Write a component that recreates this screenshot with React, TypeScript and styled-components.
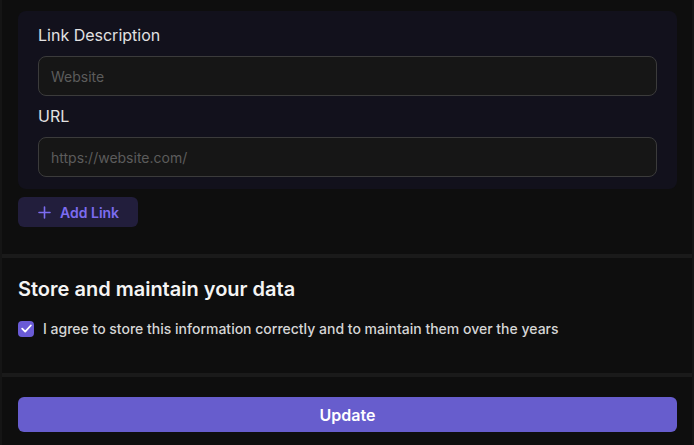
import React from "react";
import styled, { createGlobalStyle } from "styled-components";

const Global = createGlobalStyle`
  html, body { margin: 0; padding: 0; background: #0e0e0e; }
  body { font-family: Inter, "Noto Sans", sans-serif; -webkit-font-smoothing: antialiased; }
  * { box-sizing: border-box; }
`;

const Page = styled.div`
  width: 694px;
  height: 445px;
  overflow: hidden;
  background: #0e0e0e;
  border-left: 2px solid #151515;
  border-right: 2px solid #151515;
  display: flex;
  flex-direction: column;
`;

const Section = styled.section<{ $pt: number; $pb: number }>`
  padding: ${(p) => p.$pt}px 15px ${(p) => p.$pb}px 16px;
  border-bottom: 4px solid #1a1a1a;
  &:last-child { border-bottom: none; }
  display: flex;
  flex-direction: column;
`;

const Card = styled.div`
  background: #12111c;
  border-radius: 8px;
  padding: 14px 20px 12px 20px;
  display: flex;
  flex-direction: column;
`;

const Label = styled.label`
  color: #e2e2e2;
  font-size: 16px;
  font-weight: 400;
  line-height: 20px;
  margin-bottom: 11px;
`;

const Input = styled.input`
  height: 40px;
  width: 100%;
  background: #161616;
  border: 1px solid #3b3b3b;
  border-radius: 8px;
  padding: 0 12px;
  font-family: Inter, sans-serif;
  font-size: 14px;
  color: #ddd;
  outline: none;
  margin-bottom: 10px;
  &:last-child { margin-bottom: 0; }
  &::placeholder { color: #5c5c5c; }
`;

const AddButton = styled.button`
  margin-top: 8px;
  align-self: flex-start;
  width: 120px;
  height: 30px;
  border: none;
  border-radius: 6px;
  background: #221e3c;
  color: #7c6cf0;
  font-family: Inter, sans-serif;
  font-size: 14px;
  font-weight: 600;
  display: flex;
  align-items: center;
  gap: 9px;
  padding: 0 0 0 20px;
`;

const Heading = styled.h2`
  margin: 0;
  color: #f4f4f4;
  font-size: 20px;
  font-weight: 600;
  line-height: 24px;
`;

const CheckRow = styled.label`
  margin-top: 19px;
  display: flex;
  align-items: center;
  gap: 9px;
  color: #d6d6d6;
  font-size: 14px;
  line-height: 17px;
  font-weight: 500;
`;

const Box = styled.span`
  width: 16px;
  height: 16px;
  border-radius: 4px;
  background: #6a5bd6;
  display: flex;
  align-items: center;
  justify-content: center;
`;

const UpdateButton = styled.button`
  height: 35px;
  width: 100%;
  border: none;
  border-radius: 6px;
  background: #675dcd;
  color: #fff;
  font-family: Inter, sans-serif;
  font-size: 16px;
  font-weight: 600;
`;

export default function App() {
  return (
    <>
      <Global />
      <Page>
        <Section $pt={11} $pb={27}>
          <Card>
            <Label>Link Description</Label>
            <Input placeholder="Website" />
            <Label>URL</Label>
            <Input placeholder="https://website.com/" />
          </Card>
          <AddButton>
            <svg width="13" height="13" viewBox="0 0 13 13" fill="none">
              <path d="M6.5 1v11M1 6.5h11" stroke="#7c6cf0" strokeWidth="1.6" strokeLinecap="round" />
            </svg>
            Add Link
          </AddButton>
        </Section>
        <Section $pt={19} $pb={36}>
          <Heading>Store and maintain your data</Heading>
          <CheckRow>
            <Box>
              <svg width="11" height="9" viewBox="0 0 11 9" fill="none">
                <path d="M1.2 4.6l3 3L9.8 1.5" stroke="#fff" strokeWidth="1.8" strokeLinecap="round" strokeLinejoin="round" />
              </svg>
            </Box>
            I agree to store this information correctly and to maintain them over the years
          </CheckRow>
        </Section>
        <Section $pt={20} $pb={13}>
          <UpdateButton>Update</UpdateButton>
        </Section>
      </Page>
    </>
  );
}
